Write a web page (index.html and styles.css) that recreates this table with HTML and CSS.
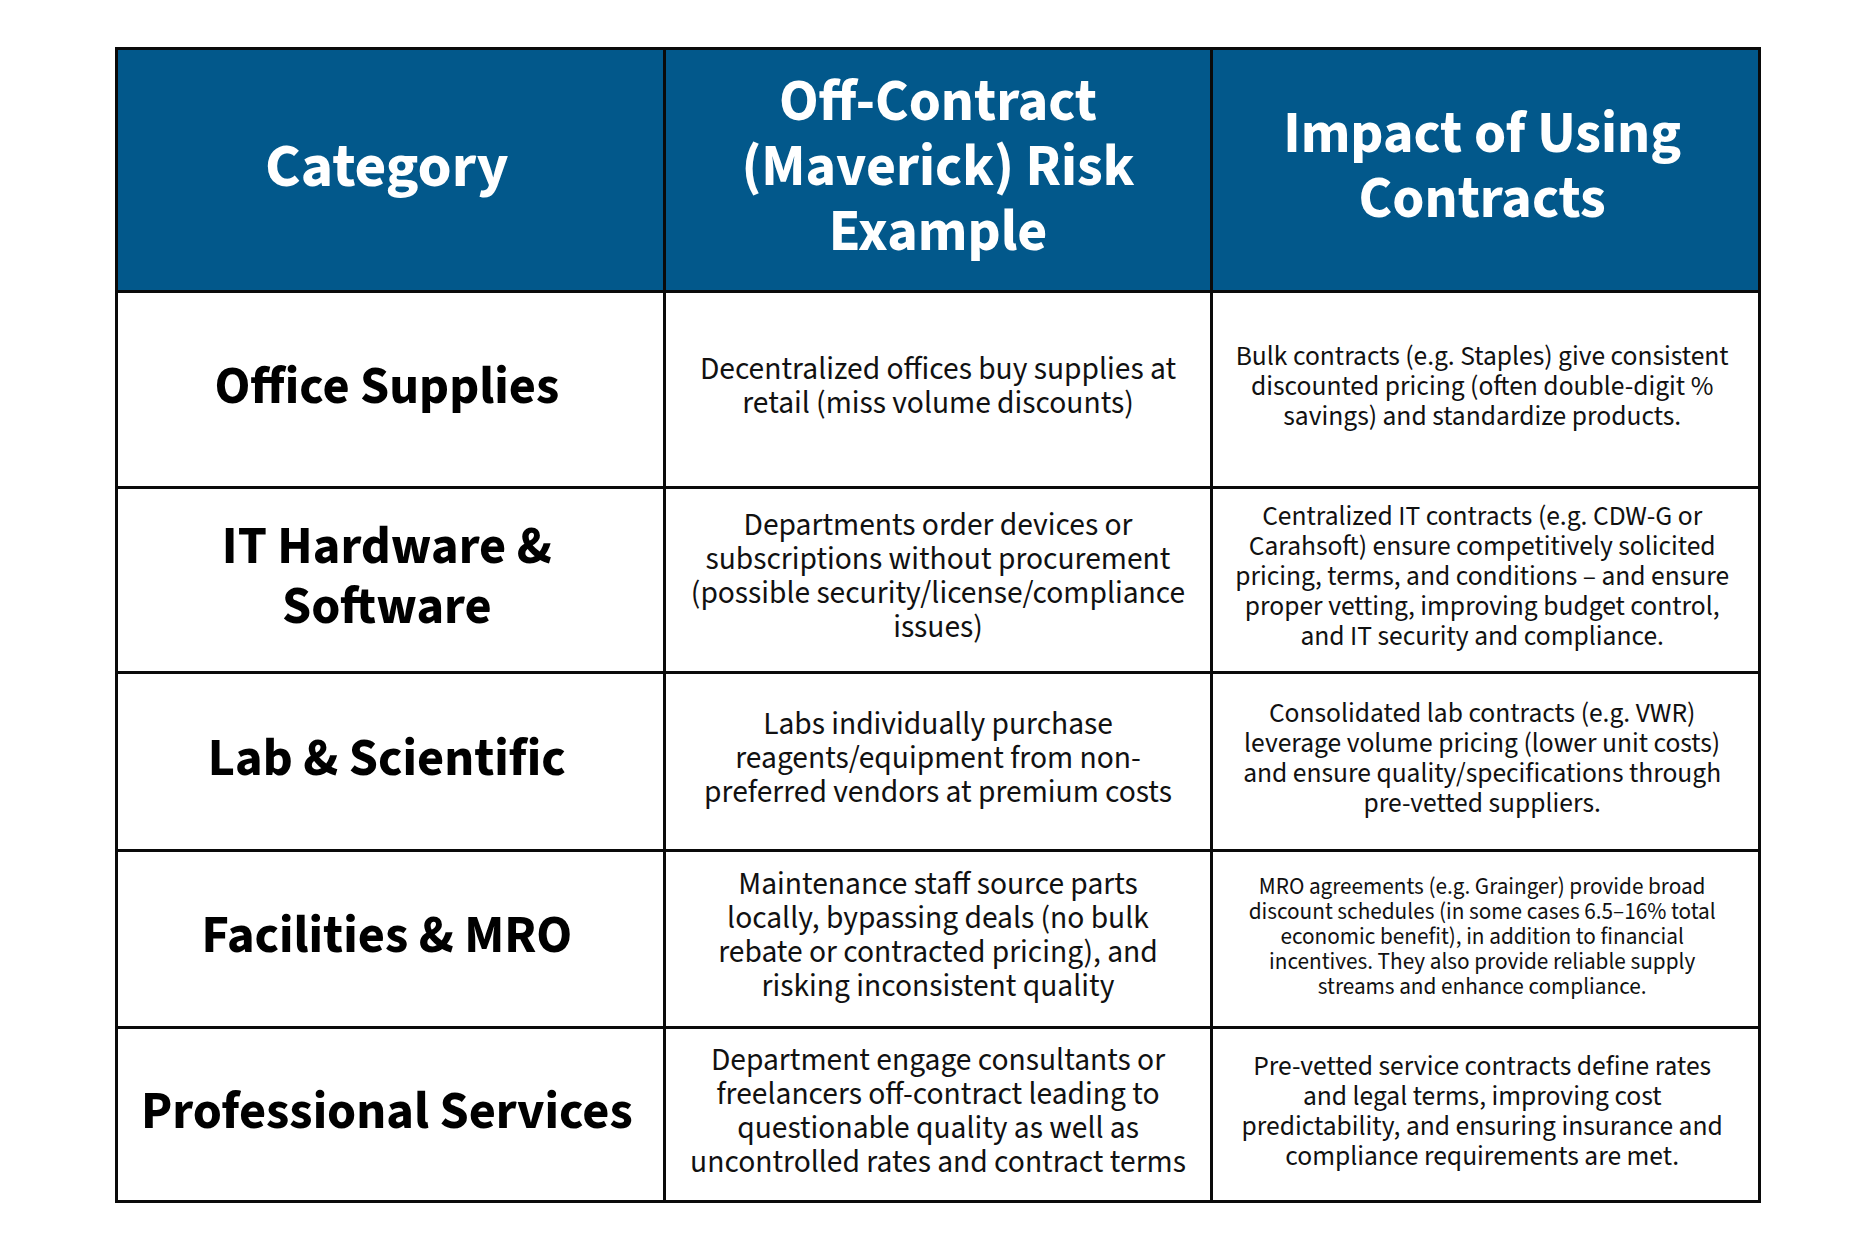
FILE: index.html
```html
<!DOCTYPE html>
<html lang="en">
<head>
<meta charset="utf-8">
<title>Contract categories</title>
<link rel="stylesheet" href="styles.css">
</head>
<body>
<div class="table">
  <div class="cell head head-main shift">Category</div>
  <div class="cell head">Off-Contract<br>(Maverick) Risk<br>Example</div>
  <div class="cell head shift">Impact of Using<br>Contracts</div>

  <div class="cell cat shift">Office Supplies</div>
  <div class="cell risk">Decentralized offices buy supplies at<br>retail (miss volume discounts)</div>
  <div class="cell impact shift">Bulk contracts (e.g. Staples) give consistent<br>discounted pricing (often double-digit %<br>savings) and standardize products.</div>

  <div class="cell cat shift">IT Hardware &amp;<br>Software</div>
  <div class="cell risk">Departments order devices or<br>subscriptions without procurement<br>(possible security/license/compliance<br>issues)</div>
  <div class="cell impact shift">Centralized IT contracts (e.g. CDW-G or<br>Carahsoft) ensure competitively solicited<br>pricing, terms, and conditions – and ensure<br>proper vetting, improving budget control,<br>and IT security and compliance.</div>

  <div class="cell cat shift">Lab &amp; Scientific</div>
  <div class="cell risk">Labs individually purchase<br>reagents/equipment from non-<br>preferred vendors at premium costs</div>
  <div class="cell impact shift">Consolidated lab contracts (e.g. VWR)<br>leverage volume pricing (lower unit costs)<br>and ensure quality/specifications through<br>pre-vetted suppliers.</div>

  <div class="cell cat shift">Facilities &amp; MRO</div>
  <div class="cell risk">Maintenance staff source parts<br>locally, bypassing deals (no bulk<br>rebate or contracted pricing), and<br>risking inconsistent quality</div>
  <div class="cell impact small shift">MRO agreements (e.g. Grainger) provide broad<br>discount schedules (in some cases 6.5–16% total<br>economic benefit), in addition to financial<br>incentives. They also provide reliable supply<br>streams and enhance compliance.</div>

  <div class="cell cat shift">Professional Services</div>
  <div class="cell risk">Department engage consultants or<br>freelancers off-contract leading to<br>questionable quality as well as<br>uncontrolled rates and contract terms</div>
  <div class="cell impact shift">Pre-vetted service contracts define rates<br>and legal terms, improving cost<br>predictability, and ensuring insurance and<br>compliance requirements are met.</div>
</div>
</body>
</html>
```
FILE: styles.css
```css
html, body {
  margin: 0;
  padding: 0;
  background: #ffffff;
}
body {
  padding: 47px 0 0 115px;
  font-family: "Source Sans Pro", "Source Sans 3", Lato, "Liberation Sans", sans-serif;
  color: #111111;
}
.table {
  width: 1646px;
  box-sizing: border-box;
  display: grid;
  grid-template-columns: 1fr 1fr 1fr;
  grid-template-rows: 240px 193px 182px 175px 174px 171px;
  gap: 3px;
  border: 3px solid #0a0a0a;
  background: #0a0a0a;
}
.cell {
  background: #ffffff;
  display: flex;
  align-items: center;
  justify-content: center;
  text-align: center;
  padding-bottom: 6px;
}
.shift {
  padding-right: 7px;
}
.head {
  background: #02588b;
  color: #ffffff;
  font-weight: 700;
  font-size: 58px;
  line-height: 65px;
}
.head-main {
  font-size: 61.5px;
}
.cat {
  font-weight: 700;
  font-size: 52.5px;
  line-height: 60px;
  color: #000000;
}
.risk {
  font-size: 31.5px;
  line-height: 34px;
}
.impact {
  font-size: 27.5px;
  line-height: 30px;
}
.impact.small {
  font-size: 23.2px;
  line-height: 25px;
}
```
